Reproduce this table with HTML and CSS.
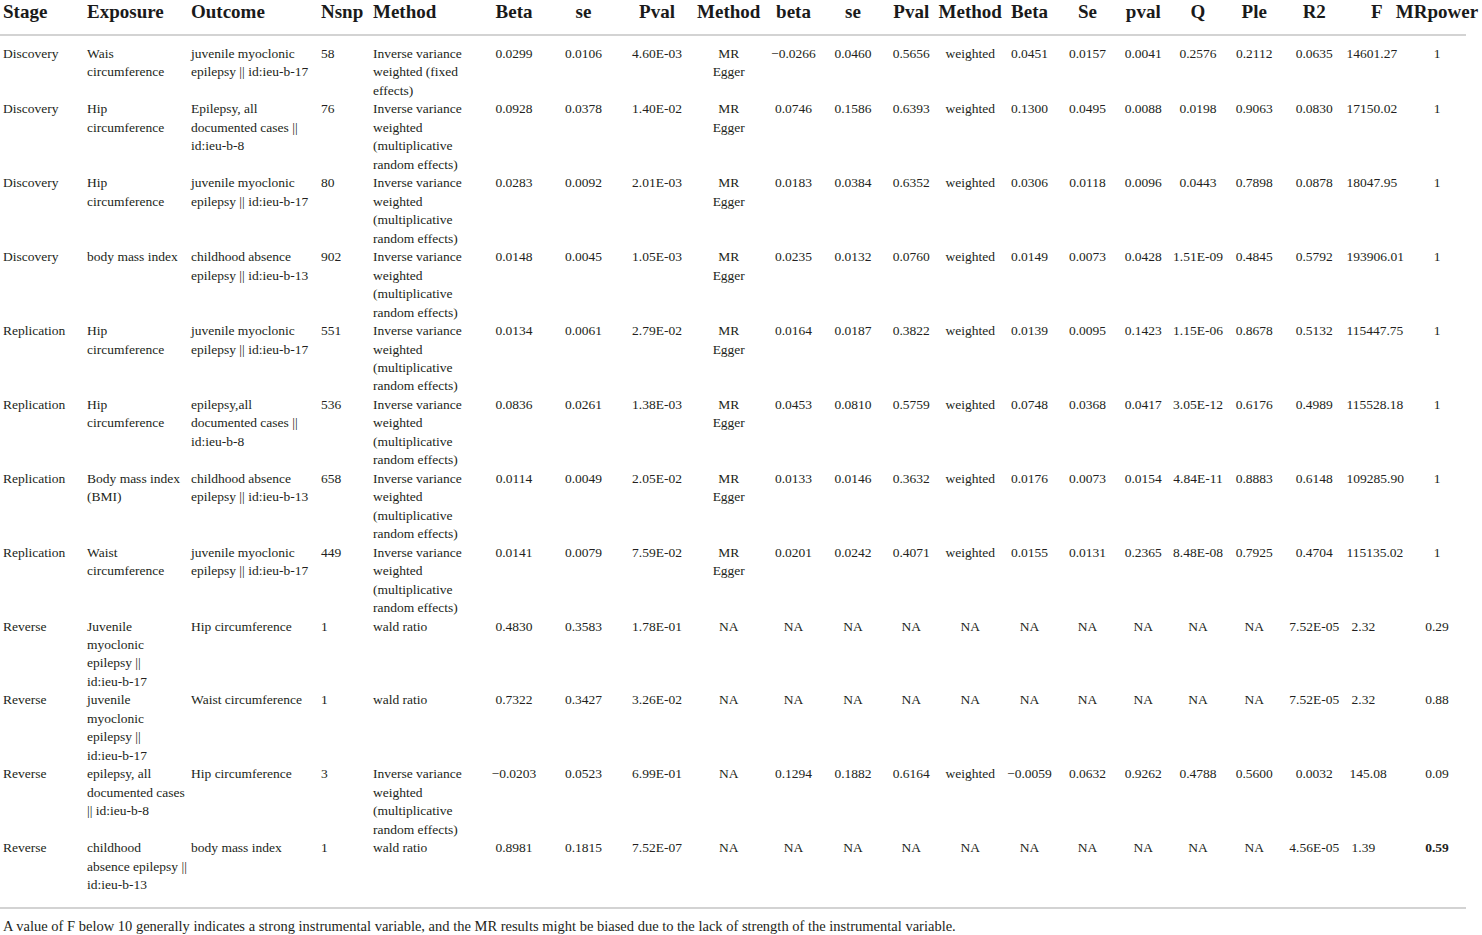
FILE: index.html
```html
<!DOCTYPE html>
<html lang="en">
<head>
<meta charset="utf-8">
<title>MR results</title>
<link rel="stylesheet" href="styles.css">
</head>
<body>
<table class="mr">
  <colgroup>
    <col class="w-stage"><col class="w-exp"><col class="w-out"><col class="w-nsnp"><col class="w-meth">
    <col class="w-beta"><col class="w-se"><col class="w-pval"><col class="w-m2"><col class="w-beta2">
    <col class="w-se2"><col class="w-pval2"><col class="w-m3"><col class="w-beta3"><col class="w-se3">
    <col class="w-pval3"><col class="w-q"><col class="w-ple"><col class="w-r2"><col class="w-f"><col class="w-pow">
  </colgroup>
  <thead>
    <tr>
      <th class="l"><div class="h">Stage</div></th>
      <th class="l"><div class="h">Exposure</div></th>
      <th class="l"><div class="h">Outcome</div></th>
      <th class="l"><div class="h">Nsnp</div></th>
      <th class="l"><div class="h">Method</div></th>
      <th><div class="h">Beta</div></th>
      <th><div class="h">se</div></th>
      <th><div class="h">Pval</div></th>
      <th><div class="h">Method</div></th>
      <th><div class="h">beta</div></th>
      <th><div class="h">se</div></th>
      <th><div class="h">Pval</div></th>
      <th><div class="h">Method</div></th>
      <th><div class="h">Beta</div></th>
      <th><div class="h">Se</div></th>
      <th><div class="h">pval</div></th>
      <th><div class="h">Q</div></th>
      <th><div class="h">Ple</div></th>
      <th><div class="h">R2</div></th>
      <th><div class="h">F</div></th>
      <th><div class="h">MRpower</div></th>
    </tr>
  </thead>
  <tbody>
    <tr>
      <td class="l">Discovery</td><td class="l">Wais<br>circumference</td><td class="l">juvenile myoclonic<br>epilepsy || id:ieu-b-17</td><td class="l">58</td><td class="l">Inverse variance<br>weighted (fixed<br>effects)</td>
      <td>0.0299</td><td>0.0106</td><td>4.60E-03</td><td>MR<br>Egger</td><td>−0.0266</td><td>0.0460</td><td>0.5656</td><td>weighted</td><td>0.0451</td><td>0.0157</td><td>0.0041</td><td>0.2576</td><td>0.2112</td><td>0.0635</td><td class="f">14601.27</td><td>1</td>
    </tr>
    <tr>
      <td class="l">Discovery</td><td class="l">Hip<br>circumference</td><td class="l">Epilepsy, all<br>documented cases ||<br>id:ieu-b-8</td><td class="l">76</td><td class="l">Inverse variance<br>weighted<br>(multiplicative<br>random effects)</td>
      <td>0.0928</td><td>0.0378</td><td>1.40E-02</td><td>MR<br>Egger</td><td>0.0746</td><td>0.1586</td><td>0.6393</td><td>weighted</td><td>0.1300</td><td>0.0495</td><td>0.0088</td><td>0.0198</td><td>0.9063</td><td>0.0830</td><td class="f">17150.02</td><td>1</td>
    </tr>
    <tr>
      <td class="l">Discovery</td><td class="l">Hip<br>circumference</td><td class="l">juvenile myoclonic<br>epilepsy || id:ieu-b-17</td><td class="l">80</td><td class="l">Inverse variance<br>weighted<br>(multiplicative<br>random effects)</td>
      <td>0.0283</td><td>0.0092</td><td>2.01E-03</td><td>MR<br>Egger</td><td>0.0183</td><td>0.0384</td><td>0.6352</td><td>weighted</td><td>0.0306</td><td>0.0118</td><td>0.0096</td><td>0.0443</td><td>0.7898</td><td>0.0878</td><td class="f">18047.95</td><td>1</td>
    </tr>
    <tr>
      <td class="l">Discovery</td><td class="l">body mass index</td><td class="l">childhood absence<br>epilepsy || id:ieu-b-13</td><td class="l">902</td><td class="l">Inverse variance<br>weighted<br>(multiplicative<br>random effects)</td>
      <td>0.0148</td><td>0.0045</td><td>1.05E-03</td><td>MR<br>Egger</td><td>0.0235</td><td>0.0132</td><td>0.0760</td><td>weighted</td><td>0.0149</td><td>0.0073</td><td>0.0428</td><td>1.51E-09</td><td>0.4845</td><td>0.5792</td><td class="f">193906.01</td><td>1</td>
    </tr>
    <tr>
      <td class="l">Replication</td><td class="l">Hip<br>circumference</td><td class="l">juvenile myoclonic<br>epilepsy || id:ieu-b-17</td><td class="l">551</td><td class="l">Inverse variance<br>weighted<br>(multiplicative<br>random effects)</td>
      <td>0.0134</td><td>0.0061</td><td>2.79E-02</td><td>MR<br>Egger</td><td>0.0164</td><td>0.0187</td><td>0.3822</td><td>weighted</td><td>0.0139</td><td>0.0095</td><td>0.1423</td><td>1.15E-06</td><td>0.8678</td><td>0.5132</td><td class="f">115447.75</td><td>1</td>
    </tr>
    <tr>
      <td class="l">Replication</td><td class="l">Hip<br>circumference</td><td class="l">epilepsy,all<br>documented cases ||<br>id:ieu-b-8</td><td class="l">536</td><td class="l">Inverse variance<br>weighted<br>(multiplicative<br>random effects)</td>
      <td>0.0836</td><td>0.0261</td><td>1.38E-03</td><td>MR<br>Egger</td><td>0.0453</td><td>0.0810</td><td>0.5759</td><td>weighted</td><td>0.0748</td><td>0.0368</td><td>0.0417</td><td>3.05E-12</td><td>0.6176</td><td>0.4989</td><td class="f">115528.18</td><td>1</td>
    </tr>
    <tr>
      <td class="l">Replication</td><td class="l">Body mass index<br>(BMI)</td><td class="l">childhood absence<br>epilepsy || id:ieu-b-13</td><td class="l">658</td><td class="l">Inverse variance<br>weighted<br>(multiplicative<br>random effects)</td>
      <td>0.0114</td><td>0.0049</td><td>2.05E-02</td><td>MR<br>Egger</td><td>0.0133</td><td>0.0146</td><td>0.3632</td><td>weighted</td><td>0.0176</td><td>0.0073</td><td>0.0154</td><td>4.84E-11</td><td>0.8883</td><td>0.6148</td><td class="f">109285.90</td><td>1</td>
    </tr>
    <tr>
      <td class="l">Replication</td><td class="l">Waist<br>circumference</td><td class="l">juvenile myoclonic<br>epilepsy || id:ieu-b-17</td><td class="l">449</td><td class="l">Inverse variance<br>weighted<br>(multiplicative<br>random effects)</td>
      <td>0.0141</td><td>0.0079</td><td>7.59E-02</td><td>MR<br>Egger</td><td>0.0201</td><td>0.0242</td><td>0.4071</td><td>weighted</td><td>0.0155</td><td>0.0131</td><td>0.2365</td><td>8.48E-08</td><td>0.7925</td><td>0.4704</td><td class="f">115135.02</td><td>1</td>
    </tr>
    <tr>
      <td class="l">Reverse</td><td class="l">Juvenile<br>myoclonic<br>epilepsy ||<br>id:ieu-b-17</td><td class="l">Hip circumference</td><td class="l">1</td><td class="l">wald ratio</td>
      <td>0.4830</td><td>0.3583</td><td>1.78E-01</td><td>NA</td><td>NA</td><td>NA</td><td>NA</td><td>NA</td><td>NA</td><td>NA</td><td>NA</td><td>NA</td><td>NA</td><td>7.52E-05</td><td class="f fs">2.32</td><td>0.29</td>
    </tr>
    <tr>
      <td class="l">Reverse</td><td class="l">juvenile<br>myoclonic<br>epilepsy ||<br>id:ieu-b-17</td><td class="l">Waist circumference</td><td class="l">1</td><td class="l">wald ratio</td>
      <td>0.7322</td><td>0.3427</td><td>3.26E-02</td><td>NA</td><td>NA</td><td>NA</td><td>NA</td><td>NA</td><td>NA</td><td>NA</td><td>NA</td><td>NA</td><td>NA</td><td>7.52E-05</td><td class="f fs">2.32</td><td>0.88</td>
    </tr>
    <tr>
      <td class="l">Reverse</td><td class="l">epilepsy, all<br>documented cases<br>|| id:ieu-b-8</td><td class="l">Hip circumference</td><td class="l">3</td><td class="l">Inverse variance<br>weighted<br>(multiplicative<br>random effects)</td>
      <td>−0.0203</td><td>0.0523</td><td>6.99E-01</td><td>NA</td><td>0.1294</td><td>0.1882</td><td>0.6164</td><td>weighted</td><td>−0.0059</td><td>0.0632</td><td>0.9262</td><td>0.4788</td><td>0.5600</td><td>0.0032</td><td class="f fm">145.08</td><td>0.09</td>
    </tr>
    <tr>
      <td class="l">Reverse</td><td class="l">childhood<br>absence epilepsy ||<br>id:ieu-b-13</td><td class="l">body mass index</td><td class="l">1</td><td class="l">wald ratio</td>
      <td>0.8981</td><td>0.1815</td><td>7.52E-07</td><td>NA</td><td>NA</td><td>NA</td><td>NA</td><td>NA</td><td>NA</td><td>NA</td><td>NA</td><td>NA</td><td>NA</td><td>4.56E-05</td><td class="f fs">1.39</td><td><b>0.59</b></td>
    </tr>
  </tbody>
</table>
<p class="note">A value of F below 10 generally indicates a strong instrumental variable, and the MR results might be biased due to the lack of strength of the instrumental variable.</p>
</body>
</html>
```

FILE: styles.css
```css
html, body {
  margin: 0;
  padding: 0;
  background: #ffffff;
}

body {
  font-family: "Liberation Serif", "Times New Roman", serif;
  color: #231f20;
}

.mr {
  border-collapse: collapse;
  table-layout: fixed;
  width: 1466px;
}

.w-stage { width: 84px; }
.w-exp { width: 104px; }
.w-out { width: 130px; }
.w-nsnp { width: 52px; }
.w-meth { width: 110.5px; }
.w-beta { width: 67px; }
.w-se { width: 72px; }
.w-pval { width: 75px; }
.w-m2 { width: 68.5px; }
.w-beta2 { width: 61px; }
.w-se2 { width: 58px; }
.w-pval2 { width: 58.5px; }
.w-m3 { width: 59.5px; }
.w-beta3 { width: 59px; }
.w-se3 { width: 57px; }
.w-pval3 { width: 54.5px; }
.w-q { width: 55px; }
.w-ple { width: 57.5px; }
.w-r2 { width: 62.5px; }
.w-f { width: 62.5px; }
.w-pow { width: 58px; }

.mr th {
  font-size: 19px;
  font-weight: bold;
  line-height: 24px;
  padding: 0 0 10px 0;
  border-bottom: 2px solid #d3d3d3;
  color: #1a1a1a;
  white-space: nowrap;
}

.mr th .h {
  display: flex;
  justify-content: center;
}

.mr th.l .h {
  justify-content: flex-start;
  padding-left: 3px;
}

.mr td {
  font-size: 13.5px;
  line-height: 18.47px;
  padding: 0;
  vertical-align: top;
  text-align: center;
  white-space: nowrap;
}

.mr td.l {
  text-align: left;
  padding-left: 3px;
}

.mr td.f {
  text-align: left;
  padding-left: 1px;
}

.mr td.fs {
  padding-left: 6px;
}

.mr td.fm {
  padding-left: 4px;
}

.mr tbody tr:first-child td {
  padding-top: 9px;
}

.mr tbody tr:last-child td {
  padding-bottom: 12px;
  border-bottom: 2px solid #d3d3d3;
}

.note {
  margin: 7px 0 0 3px;
  font-size: 14.5px;
  line-height: 20px;
}
```
